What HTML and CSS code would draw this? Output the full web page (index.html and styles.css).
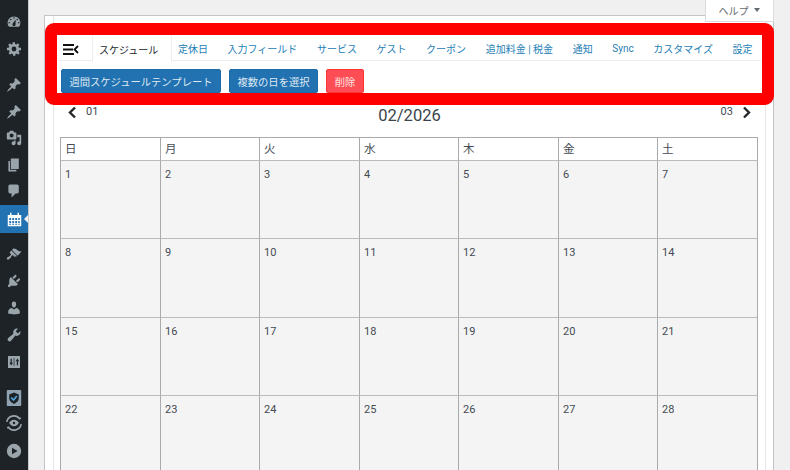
FILE: index.html
```html
<!DOCTYPE html>
<html lang="ja">
<head>
<meta charset="utf-8">
<title>スケジュール</title>
<link rel="stylesheet" href="styles.css">
</head>
<body>
<div class="layout">
  <nav class="sidebar">
    <svg class="ico" viewBox="0 0 20 20"><path fill-rule="evenodd" d="M3.760 16h12.480c1.100-1.370 1.760-3.110 1.760-5 0-4.420-3.580-8-8-8s-8 3.580-8 8c0 1.890.66 3.630 1.760 5zM10 4c.55 0 1 .45 1 1s-.45 1-1 1-1-.45-1-1 .45-1 1-1zM6 6c.55 0 1 .45 1 1s-.45 1-1 1-1-.45-1-1 .45-1 1-1zm8 0c.55 0 1 .45 1 1s-.45 1-1 1-1-.45-1-1 .45-1 1-1zm-5.370 5.550L12 7v6c0 1.100-.9 2-2 2s-2-.9-2-2c0-.57.24-1.080.63-1.450zM4 10c.55 0 1 .45 1 1s-.45 1-1 1-1-.45-1-1 .45-1 1-1zm12 0c.55 0 1 .45 1 1s-.45 1-1 1-1-.45-1-1 .45-1 1-1z"/></svg>
    <svg class="ico" viewBox="0 0 20 20"><path fill-rule="evenodd" d="M18 11.500h-2.200c-.15.700-.44 1.350-.81 1.930l1.550 1.550-2.120 2.120-1.550-1.550c-.58.370-1.230.660-1.920.81V18.500h-3v-2.140c-.69-.15-1.340-.44-1.920-.81l-1.550 1.550-2.120-2.120 1.550-1.550c-.37-.58-.66-1.230-.81-1.930H0.450v-3H2.650c.15-.7.44-1.350.81-1.930L1.910 5.020 4.030 2.900l1.550 1.550c.58-.37 1.230-.66 1.920-.81V1.500h3v2.140c.69.15 1.340.44 1.920.81l1.550-1.550 2.120 2.120-1.550 1.550c.37.58.66 1.230.81 1.930H18zM9.250 7a3 3 0 1 0 0 6 3 3 0 0 0 0-6z" transform="translate(.75)"/></svg>
    <svg class="ico sep" viewBox="0 0 20 20"><path d="M10.440 3.020l1.820-1.820 6.360 6.350-1.830 1.820c-1.050-.68-2.480-.57-3.410.36l-.75.75c-.92.93-1.040 2.350-.35 3.410l-1.830 1.820-2.410-2.410-2.800 2.790c-.42.42-3.380 2.710-3.800 2.290s1.860-3.390 2.280-3.810l2.790-2.790L4.100 9.360l1.830-1.820c1.050.69 2.480.57 3.400-.36l.75-.75c.93-.92 1.050-2.350.36-3.410z"/></svg>
    <svg class="ico" viewBox="0 0 20 20"><path d="M10.440 3.020l1.820-1.820 6.360 6.350-1.830 1.820c-1.050-.68-2.480-.57-3.410.36l-.75.75c-.92.93-1.040 2.350-.35 3.410l-1.830 1.820-2.410-2.410-2.800 2.790c-.42.42-3.380 2.710-3.800 2.290s1.860-3.390 2.280-3.810l2.790-2.790L4.100 9.360l1.830-1.820c1.050.69 2.480.57 3.400-.36l.75-.75c.93-.92 1.050-2.350.36-3.410z"/></svg>
    <svg class="ico" viewBox="0 0 20 20"><path fill-rule="evenodd" d="M13 11V4c0-.55-.45-1-1-1h-1.670L9 1H5L3.670 3H2c-.55 0-1 .45-1 1v7c0 .55.45 1 1 1h10c.55 0 1-.45 1-1zM7 4.500c1.380 0 2.500 1.120 2.500 2.500S8.380 9.500 7 9.500 4.500 8.380 4.500 7 5.620 4.500 7 4.500z"/><path d="M14 6h5v10.500c0 1.380-1.120 2.500-2.500 2.500S14 17.880 14 16.500s1.120-2.500 2.500-2.500c.17 0 .34.02.5.05V9h-3V6zm-4 8.050V13h2v3.500c0 1.380-1.120 2.500-2.500 2.500S7 17.880 7 16.500 8.120 14 9.500 14c.17 0 .34.02.5.05z"/></svg>
    <svg class="ico" viewBox="0 0 20 20"><path d="M6 15V2h10v13H6zm-1 1h8v2H3V5h2v11z"/></svg>
    <svg class="ico" viewBox="0 0 20 20"><path d="M5 2h9c1.100 0 2 .9 2 2v7c0 1.100-.9 2-2 2h-2l-5 5v-5H5c-1.100 0-2-.9-2-2V4c0-1.100.9-2 2-2z"/></svg>
    <div class="active-item">
      <svg class="ico-active" viewBox="0 0 20 20"><path fill-rule="evenodd" d="M4 1h2v3h8V1h2v3h3v15H1V4h3zM3 8v2.500h2.500V8zm4 0v2.500h2.500V8zm4 0v2.500h2.500V8zm4 0v2.500h2V8zM3 12v2.500h2.500V12zm4 0v2.500h2.500V12zm4 0v2.500h2.500V12zm4 0v2.500h2V12zM3 15.500V17h2.500v-1.500zm4 0V17h2.500v-1.500zm4 0V17h2.500v-1.500zm4 0V17h2v-1.500z"/></svg>
    </div>
    <svg class="ico step after-active" viewBox="0 0 20 20"><path d="M14.480 11.060L7.410 3.990l1.500-1.500c.5-.56 2.300-.47 3.510.32 1.210.8 1.430 1.280 2.910 2.100 1.180.64 2.450 1.260 4.230.91zm-.71.71L6.700 4.700 4.930 6.470c-.39.39-.39 1.020 0 1.410l1.060 1.060c.39.39.39 1.030 0 1.420-.6.6-1.430 1.110-2.210 1.690-.35.26-.7.53-1.010.84C1.430 13.230.4 14.610 1.400 15.610c.99 1 2.380-.03 3.720-1.370.31-.31.58-.66.84-1.020.58-.78 1.090-1.600 1.690-2.210.39-.39 1.020-.39 1.410 0l1.060 1.060c.39.39 1.020.39 1.410 0z" transform="translate(0 1)"/></svg>
    <svg class="ico step" viewBox="0 0 20 20"><path d="M13.110 4.360L9.870 7.600 8 5.730l3.240-3.240c.35-.34 1.050-.2 1.560.32.52.51.66 1.210.31 1.550zm-8 1.770l.91-1.120 9.010 9.010-1.190.84c-.71.71-2.630 1.160-3.820 1.160H6.140L4.900 17.260c-.59.59-1.540.59-2.120 0-.59-.58-.59-1.530 0-2.120l1.240-1.240v-3.880c0-1.130.4-3.180 1.090-3.890zm7.260 3.970l3.240-3.240c.34-.35 1.040-.21 1.550.31.52.51.66 1.210.31 1.550l-3.240 3.250z"/></svg>
    <svg class="ico step" viewBox="0 0 20 20"><path d="M10 9.250c-2.270 0-2.730-3.440-2.730-3.440C7 4.020 7.820 2 9.970 2c2.160 0 2.980 2.020 2.710 3.810 0 0-.41 3.440-2.680 3.440zm0 2.570L12.720 10c2.390 0 4.520 2.330 4.520 4.530v2.490s-3.650 1.130-7.240 1.130c-3.650 0-7.240-1.130-7.240-1.130v-2.490c0-2.250 1.940-4.530 4.610-4.530z"/></svg>
    <svg class="ico step" viewBox="0 0 20 20"><path d="M16.680 9.770c-1.340 1.340-3.300 1.670-4.950.99l-5.410 6.520c-.99.99-2.590.99-3.570 0-.99-.98-.99-2.580 0-3.570l6.520-5.420c-.68-1.650-.35-3.610.99-4.950 1.280-1.280 3.120-1.620 4.720-1.060l-2.890 2.890 2.820 2.820 2.890-2.890c.56 1.600.22 3.440-1.060 4.720z"/></svg>
    <svg class="ico step" viewBox="0 0 20 20"><path fill-rule="evenodd" d="M2.500 2.500h15v15h-15zM5.700 6v5H4.200l2.300 3.500L8.800 11H7.300V6zM13.500 14V9H12l2.300-3.500L16.600 9h-1.500v5zM9.600 5h.9v10h-.9z"/></svg>
    <svg class="ico sep2 shield" viewBox="0 0 20 20"><rect x="1" y="0" width="18" height="20" rx="1" class="shield-back"/><path d="M10 3l6 2.500V10c0 3.500-2.500 5.500-6 7.500-3.500-2-6-4-6-7.500V5.500z" class="shield-mid"/><path d="M6.500 9.500l3 3 4-5" class="shield-check"/></svg>
    <svg class="ico eye" viewBox="0 0 20 20"><path d="M10 6a7 7 0 0 1 6 4 7 7 0 0 1-6 4 7 7 0 0 1-6-4 7 7 0 0 1 6-4z"/><circle cx="10" cy="10" r="1.500" class="eye-pupil"/><path d="M1 8.500a9 9 0 0 1 16-3.800l1.500-1M19 11.500a9 9 0 0 1-16 3.800l-1.500 1" class="eye-ring"/></svg>
    <svg class="ico" viewBox="0 0 20 20"><path fill-rule="evenodd" d="M10 1a9 9 0 1 0 0 18 9 9 0 0 0 0-18zM7.500 6l7 4-7 4z"/></svg>
  </nav>
  <main class="content">
    <div class="help-row"><div class="help-tab">ヘルプ <span class="caret"></span></div></div>
    <div class="outer-panel">
      <div class="inner-panel">
        <div class="toolbar">
          <div class="tabs">
            <div class="burger"><svg viewBox="0 0 16 11" width="16" height="11"><path d="M0 1h11M0 5.500h10M0 10h11" stroke="#111" stroke-width="2" fill="none"/><path d="M15 2l-3.500 3.500L15 9" stroke="#111" stroke-width="1.800" fill="none"/></svg></div>
            <a class="tab tab-active">スケジュール</a>
            <a class="tab">定休日</a>
            <a class="tab">入力フィールド</a>
            <a class="tab">サービス</a>
            <a class="tab">ゲスト</a>
            <a class="tab">クーポン</a>
            <a class="tab">追加料金 | 税金</a>
            <a class="tab">通知</a>
            <a class="tab">Sync</a>
            <a class="tab">カスタマイズ</a>
            <a class="tab">設定</a>
          </div>
          <div class="actions">
            <button class="btn btn-blue btn-wide">週間スケジュールテンプレート</button>
            <button class="btn btn-blue btn-multi">複数の日を選択</button>
            <button class="btn btn-red">削除</button>
          </div>
        </div>
        <div class="month-nav">
          <div class="month-side"><svg class="chev" viewBox="0 0 9 13" width="9" height="13"><path d="M7 1.500L2 6.500l5 5" fill="none" stroke="#23282d" stroke-width="2.400"/></svg><span class="month-small">01</span></div>
          <div class="month-title">02/2026</div>
          <div class="month-side"><span class="month-small">03</span><svg class="chev" viewBox="0 0 9 13" width="9" height="13"><path d="M2 1.500l5 5-5 5" fill="none" stroke="#23282d" stroke-width="2.400"/></svg></div>
        </div>
        <div class="calendar">
          <div class="head">日</div><div class="head">月</div><div class="head">火</div><div class="head">水</div><div class="head">木</div><div class="head">金</div><div class="head">土</div>
          <div class="day">1</div><div class="day">2</div><div class="day">3</div><div class="day">4</div><div class="day">5</div><div class="day">6</div><div class="day">7</div>
          <div class="day">8</div><div class="day">9</div><div class="day">10</div><div class="day">11</div><div class="day">12</div><div class="day">13</div><div class="day">14</div>
          <div class="day">15</div><div class="day">16</div><div class="day">17</div><div class="day">18</div><div class="day">19</div><div class="day">20</div><div class="day">21</div>
          <div class="day">22</div><div class="day">23</div><div class="day">24</div><div class="day">25</div><div class="day">26</div><div class="day">27</div><div class="day">28</div>
        </div>
      </div>
    </div>
    <div class="highlight"></div>
  </main>
</div>
</body>
</html>
```
FILE: styles.css
```css
* { box-sizing: border-box; }
html, body { margin: 0; padding: 0; height: 470px; overflow: hidden; }
body { background: #f0f0f0; font-family: "Roboto", "Noto Sans CJK JP", sans-serif; color: #444b52; }
.layout { display: flex; height: 470px; overflow: hidden; }
.sidebar { width: 28px; flex: none; background: #1d2327; display: flex; flex-direction: column; align-items: center; padding-top: 14px; box-shadow: 1px 0 0 #c9c9c9; }
.ico { width: 16px; height: 16px; fill: #9aa4ab; flex: none; margin-bottom: 10.500px; }
.sep { margin-top: 10px; }
.step { margin-bottom: 11px; }
.after-active { margin-top: 13px; }
.sep2 { margin-top: 9px; margin-bottom: 9px; }
.eye { margin-bottom: 12px; }
.shield-back { fill: #8fa3b3; }
.shield-mid { fill: #1d2327; }
.shield-check { fill: none; stroke: #4ea6e0; stroke-width: 2; }
.eye-pupil { fill: #1d2327; }
.eye-ring { fill: none; stroke: #9aa4ab; stroke-width: 2; }
.active-item { width: 28px; height: 28px; background: #2271b1; display: flex; align-items: center; justify-content: center; position: relative; margin-top: -4.500px; flex: none; }
.active-item::after { content: ""; position: absolute; right: 0; top: 10px; border: 4px solid transparent; border-right: 4px solid #f0f0f0; border-left: 0; }
.ico-active { width: 15px; height: 15px; fill: #fff; }
.content { flex: 1; position: relative; padding: 0 16px; min-width: 0; }
.help-row { display: flex; justify-content: flex-end; height: 15px; }
.help-tab { width: 69px; height: 22px; background: #fff; border: 1px solid #dcdcde; border-top: 0; font-size: 10px; color: #646970; display: flex; align-items: center; justify-content: center; gap: 5px; position: relative; z-index: 1; padding: 0 1px 1px 0; }
.caret { border: 3.500px solid transparent; border-top: 4px solid #646970; border-bottom: 0; }
.outer-panel { background: #fff; border: 1px solid #c3c4c7; height: 480px; padding: 0 8px; }
.inner-panel { border: 1px solid #e6e6e6; border-width: 0 1px; padding: 20px 4px 0; height: 480px; width: 713px; }
.toolbar { height: 56px; }
.tabs { display: flex; height: 25px; border-bottom: 1px solid #eee; align-items: stretch; }
.burger { width: 34px; flex: none; display: flex; align-items: center; padding-left: 5px; padding-top: 2px; }
.tab { font-size: 10px; color: #2580b5; display: flex; align-items: center; white-space: nowrap; margin-right: 19.600px; flex: none; }
.tab-active { color: #23282d; background: #fff; padding: 0 13px 0 6px; border-left: 1px solid #eee; border-right: 1px solid #eee; margin-right: 5.600px; height: 26px; }
.actions { display: flex; gap: 8px; padding: 8px 0 0 3px; }
.btn { height: 24px; border: 1px solid #1f6ba6; border-radius: 2px; font-family: inherit; font-size: 10.300px; padding: 0; color: #dfe9f2; background: #2271b1; }
.btn-wide { width: 160px; }
.btn-multi { width: 89px; }
.btn-red { width: 38px; background: #ff4d55; border-color: #f33; color: #ffe3e3; }
.month-nav { display: flex; justify-content: space-between; align-items: flex-start; padding: 14px 10px 0 10px; height: 45px; }
.month-side { display: flex; align-items: center; gap: 9px; font-size: 11px; }
.month-small { position: relative; top: -1px; }
.month-title { font-size: 16.500px; color: #3c434a; }
.calendar { display: grid; grid-template-columns: 100px 99px 100px 99px 100px 99px 100px; grid-template-rows: 23px 78px 79px 78px 79px; width: 698px; margin-left: 2px; border-top: 1px solid #aaa; border-left: 1px solid #aaa; }
.head, .day { border-right: 1px solid #aaa; border-bottom: 1px solid #bbb; padding-left: 4px; font-size: 11.500px; }
.head { background: #fff; line-height: 23px; }
.day { background: #f4f4f4; padding-top: 7px; font-size: 11px; }
.highlight { position: absolute; left: 17px; top: 23px; width: 729px; height: 82px; border: 12.500px solid #f00; border-radius: 9px; pointer-events: none; }
```
